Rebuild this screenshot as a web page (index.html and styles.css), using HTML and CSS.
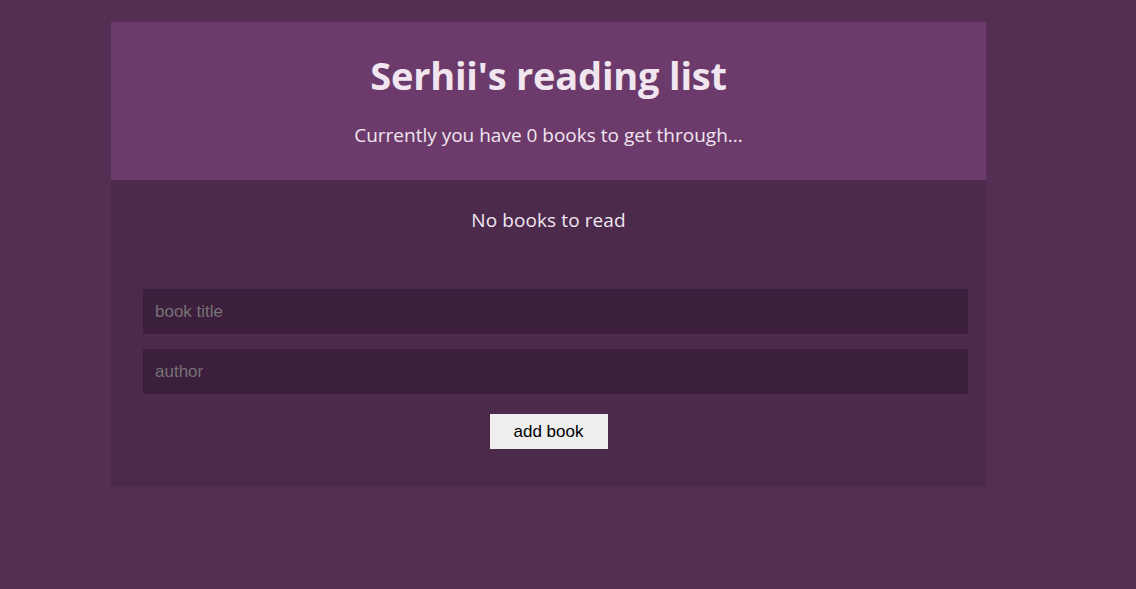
FILE: index.html
```html
<!DOCTYPE html>
<html>
<head>
<meta charset="utf-8">
<link rel="stylesheet" href="styles.css">
</head>
<body>
<div class="app">
  <header class="header">
    <h1 class="title">Serhii's reading list</h1>
    <p class="subtitle">Currently you have 0 books to get through...</p>
  </header>
  <section class="content">
    <p class="empty">No books to read</p>
    <form class="form">
      <input class="field" type="text" placeholder="book title">
      <input class="field" type="text" placeholder="author">
      <button class="btn" type="button">add book</button>
    </form>
  </section>
</div>
</body>
</html>
```
FILE: styles.css
```css
html, body {
  margin: 0;
  padding: 0;
}
body {
  background: #552e54;
  font-family: "Open Sans", "Noto Sans", sans-serif;
  color: #f1e6ef;
  min-height: 100vh;
  padding-right: 39px;
}
.app {
  width: 875px;
  margin: 22px auto 0;
}
.header {
  background: #6c3b6c;
  height: 158px;
  box-sizing: border-box;
  padding-top: 30px;
  text-align: center;
}
.title {
  margin: 0;
  font-size: 38px;
  font-weight: 700;
  line-height: 46px;
  letter-spacing: -0.2px;
}
.subtitle {
  margin: 24px 0 0;
  font-size: 19px;
  line-height: 26px;
  letter-spacing: 0;
}
.content {
  background: #4b2a4b;
  height: 307px;
  box-sizing: border-box;
  padding: 26px 0 0;
}
.empty {
  margin: 0;
  text-align: center;
  font-size: 19px;
  line-height: 28px;
  letter-spacing: 0.1px;
}
.form {
  margin-top: 55px;
  display: flex;
  flex-direction: column;
  align-items: center;
}
.field {
  align-self: stretch;
  height: 45px;
  box-sizing: border-box;
  border: none;
  outline: none;
  background: #3c1f3c;
  padding: 0 12px;
  font-family: "Liberation Sans", Arial, sans-serif;
  font-size: 17px;
  color: #ddd;
  margin: 0 18px 15px 32px;
}
.field::placeholder {
  color: #767276;
}
.btn {
  margin-top: 5px;
  width: 118px;
  height: 35px;
  border: none;
  background: #eeeeee;
  font-family: "Liberation Sans", Arial, sans-serif;
  font-size: 17px;
  color: #000;
  padding: 0;
}
```
